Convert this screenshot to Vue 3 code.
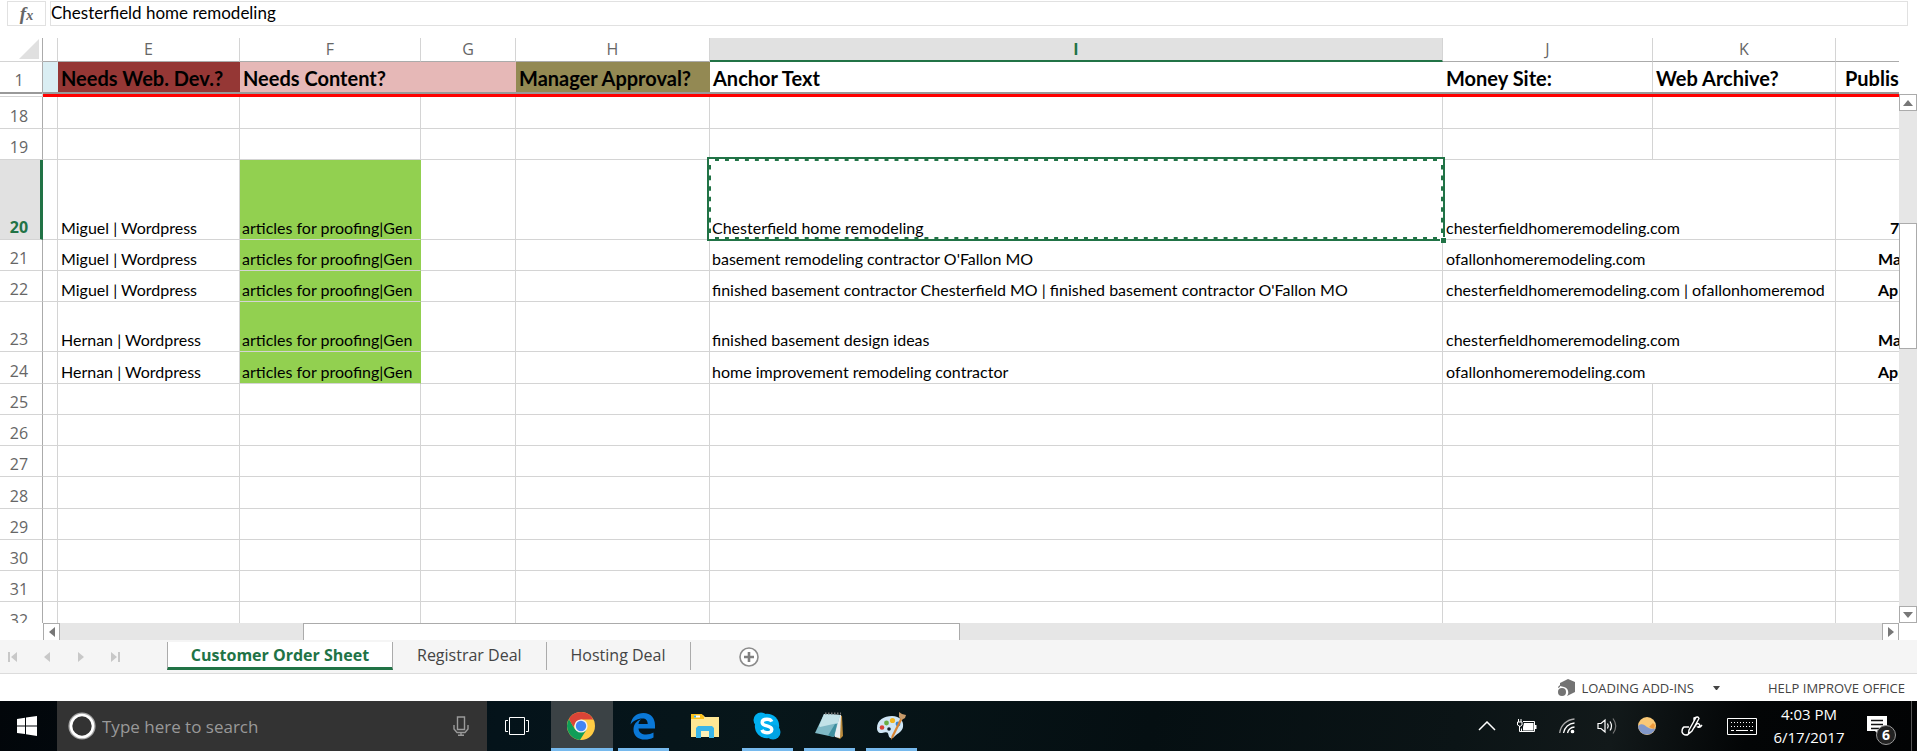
<template>
  <div class="window">
    <div class="formula-bar">
      <button class="fx" aria-label="Insert function"><i>f</i><sub>x</sub></button>
      <input v-model="formula" class="formula" aria-label="Formula bar" spellcheck="false" />
    </div>

    <div class="sheet-area">
      <div class="sheet">
        <table>
          <colgroup>
            <col class="w-head" />
            <col class="w-d" />
            <col class="w-e" />
            <col class="w-f" />
            <col class="w-g" />
            <col class="w-h" />
            <col />
            <col class="w-j" />
            <col class="w-k" />
            <col class="w-l" />
          </colgroup>
          <thead>
            <tr class="letters">
              <th class="corner"><svg width="20" height="20"><path d="M20 0V20H0Z" fill="#e0e0e0" /></svg></th>
              <th v-for="(l, i) in letters" :key="i" :class="{ active: l === 'I' }">{{ l }}</th>
            </tr>
            <tr class="titles">
              <th class="num">1</th>
              <td class="blue"></td>
              <td class="maroon">Needs Web. Dev.?</td>
              <td class="pink" colspan="2">Needs Content?</td>
              <td class="olive">Manager Approval?</td>
              <td>Anchor Text</td>
              <td class="lined">Money Site:</td>
              <td class="lined">Web Archive?</td>
              <td class="publish">Publis</td>
            </tr>
            <tr class="freeze">
              <th></th>
              <td colspan="9"></td>
            </tr>
          </thead>
          <tbody>
            <tr v-for="row in rows" :key="row.n" :class="row.size">
              <th class="num" :class="{ active: row.n === 20 }">{{ row.n }}</th>
              <td></td>
              <td><div class="text">{{ row.dev }}</div></td>
              <td :class="{ green: row.dev }"><div v-if="row.dev" class="text">articles for proofing|Gen</div></td>
              <td></td>
              <td></td>
              <td class="anchor" :class="{ selected: row.n === 20 }">
                <div class="text">{{ row.anchor }}</div>
                <div v-if="row.n === 20" class="marquee"></div>
              </td>
              <template v-if="row.site">
                <td colspan="2"><div class="text site">{{ row.site }}</div></td>
              </template>
              <template v-else>
                <td></td>
                <td></td>
              </template>
              <td class="date" :class="{ short: row.n === 20 }"><div class="text">{{ row.date }}</div></td>
            </tr>
          </tbody>
        </table>
      </div>
      <div class="vscroll">
        <button aria-label="Scroll up"><svg width="10" height="6"><path d="M5 0L10 6H0Z" /></svg></button>
        <div class="track v-before"></div>
        <div class="thumb"></div>
        <div class="track v-after"></div>
        <button aria-label="Scroll down"><svg width="10" height="6"><path d="M0 0H10L5 6Z" /></svg></button>
      </div>
    </div>

    <div class="hscroll">
      <button aria-label="Scroll left"><svg width="6" height="10"><path d="M6 0V10L0 5Z" /></svg></button>
      <div class="track h-before"></div>
      <div class="thumb"></div>
      <div class="track h-after"></div>
      <button aria-label="Scroll right"><svg width="6" height="10"><path d="M0 0V10L6 5Z" /></svg></button>
    </div>

    <div class="tabs">
      <div class="arrows">
        <button aria-label="First sheet"><svg width="10" height="10"><path d="M0 0H2V10H0ZM9 0V10L3 5Z" /></svg></button>
        <button aria-label="Previous sheet"><svg width="10" height="10"><path d="M8 0V10L2 5Z" /></svg></button>
        <button aria-label="Next sheet"><svg width="10" height="10"><path d="M2 0V10L8 5Z" /></svg></button>
        <button aria-label="Last sheet"><svg width="10" height="10"><path d="M8 0H10V10H8ZM1 0V10L7 5Z" /></svg></button>
      </div>
      <button class="tab current">Customer Order Sheet</button>
      <button class="tab">Registrar Deal</button>
      <button class="tab">Hosting Deal</button>
      <button class="add" aria-label="New sheet">
        <svg width="20" height="20" viewBox="0 0 20 20" fill="none">
          <circle cx="10" cy="10" r="9" fill="#fff" stroke="#8c8c8c" stroke-width="1.6" />
          <path d="M10 5V15M5 10H15" stroke="#808080" stroke-width="2.6" />
        </svg>
      </button>
    </div>

    <div class="status">
      <button class="addins">
        <svg width="18" height="18" viewBox="0 0 18 18" fill="#737373">
          <path d="M2 4L10 0L17 3V13L9 17A5.6 5.6 0 0 0 6 8L2 7Z" />
          <circle cx="4" cy="13" r="4" />
          <path d="M0 8L2 6V8L0 9Z" />
        </svg>
        <span>LOADING ADD-INS</span>
        <svg class="caret" width="7" height="4"><path d="M0 0H7L4 4H3Z" fill="#444" /></svg>
      </button>
      <a href="#">HELP IMPROVE OFFICE</a>
    </div>

    <div class="taskbar">
      <button class="start" aria-label="Start">
        <svg width="20" height="20" viewBox="0 0 20 20" fill="#fff">
          <path d="M0 3L8 1.8V9.4H0ZM9 1.6L20 0V9.4H9ZM0 10.4H8V18L0 17ZM9 10.4H20V20L9 18.3Z" />
        </svg>
      </button>
      <label class="search">
        <svg width="28" height="28" viewBox="0 0 28 28" fill="none">
          <circle cx="14" cy="14" r="12.6" stroke="#a5a5a5" stroke-width="2" />
          <circle cx="14" cy="14" r="11" stroke="#fff" stroke-width="2.6" />
        </svg>
        <input type="text" placeholder="Type here to search" aria-label="Type here to search" />
        <svg width="16" height="20" viewBox="0 0 16 20" fill="none" stroke="#9a9a9a" stroke-width="1.4">
          <path d="M4.5 1H11.5V13.5H4.5ZM1 9V13L4 16.5H12L15 13V9M8 16.5V19M5 19.2H11" />
        </svg>
      </label>
      <button class="taskview" aria-label="Task view">
        <svg width="24" height="18" viewBox="0 0 24 18" fill="none" stroke="#fff" stroke-width="1">
          <path d="M4.5 0.5H19.5V17.5H4.5ZM3 3.5H0.5V14.5H3M21 3.5H23.5V14.5H21" />
        </svg>
      </button>

      <button class="app focused" aria-label="Chrome">
        <svg width="28" height="28" viewBox="0 0 28 28">
          <circle cx="14" cy="14" r="14" fill="#fc4" />
          <path d="M1.9 7A14 14 0 0 0 13 28L19.6 17.5L14 20L8 17.2Z" fill="#0f9d58" />
          <path d="M1.9 7A14 14 0 0 1 26.3 7.5H14L8 12L6.500 15Z" fill="#db4437" />
          <circle cx="14" cy="14" r="6.6" fill="#f1f1f1" />
          <circle cx="14" cy="14" r="5.2" fill="#4285f4" />
        </svg>
      </button>
      <button class="app open" aria-label="Edge">
        <svg width="26" height="28" viewBox="0 0 26 28">
          <path d="M0.5 12.5C2 4.5 7 1 13.4 1C21 1 25 6.500 25 13V16.500H8.500C8.800 20.500 12 22.500 16 22.500C19 22.500 21.500 21.700 23.500 20.500V25.500C21 27 18 27.600 15 27.600C7.500 27.600 3.500 23.500 3.500 17.500C3.500 12.500 6.500 9 11 7.300C9.400 8.800 8.700 10.300 8.500 12H17.700C17.700 8.500 16 6.500 12.500 6.500C7.500 6.500 3 9 0.500 12.500Z" fill="#0a78d7" />
        </svg>
      </button>
      <button class="app" aria-label="File Explorer">
        <svg width="28" height="24" viewBox="0 0 28 24">
          <path d="M0 1H12L14 3H28V23H0Z" fill="#ffe794" />
          <path d="M0 0H11L13 3V5H0Z" fill="#fcc21c" />
          <path d="M3 1.500H9V3.500H3Z" fill="#fff" />
          <path d="M3 1.500H5V3.500H3Z" fill="#3ab5e9" />
          <path d="M5 24V14L7 12H21L23 14V24H18V17H10V24Z" fill="#3ab5e9" />
          <path d="M10 17H18V23H10Z" fill="#fdf0b8" />
        </svg>
      </button>
      <button class="app open" aria-label="Skype">
        <svg width="28" height="28" viewBox="0 0 28 28">
          <circle cx="14" cy="14" r="12.200" fill="#00aff0" />
          <circle cx="8" cy="8" r="7.500" fill="#00aff0" />
          <circle cx="20" cy="20" r="7.500" fill="#00a3e4" />
          <path d="M18.800 9.600C18 7.900 16.300 7.200 14 7.200C11.200 7.200 9.200 8.500 9.200 10.500C9.200 15 18.800 12.800 18.800 17.400C18.800 19.500 16.700 20.800 14 20.800C11.500 20.800 9.600 19.900 8.900 17.900" fill="none" stroke="#fff" stroke-width="3.400" />
        </svg>
      </button>
      <button class="app open" aria-label="Notepad">
        <svg width="28" height="28" viewBox="0 0 28 28">
          <path d="M25 3L27 4L28 24L25 27L21 25Z" fill="#b98a3c" />
          <path d="M10 2L26 3L25 26L20 25Z" fill="#e9eef0" />
          <path d="M9 2L25 3L19 25L0 21Z" fill="#7fb9c6" />
          <path d="M9 2L25 3L23 11L5 15L4 14Z" fill="#c2e2e8" />
          <path d="M20 12L13 23.500L19 25L22 12Z" fill="#3f8f9f" />
          <path d="M10 1.500H26" stroke="#777" stroke-width="2" stroke-dasharray="1.500 1.500" />
        </svg>
      </button>
      <button class="app open" aria-label="Paint">
        <svg width="30" height="28" viewBox="0 0 30 28">
          <path d="M1 16C1 8 8 4 16 4C24 4 28 9 27 15C26 20 22 21 19 24C16 27.500 13 26.500 12.500 23C12 19.500 10 20 6 21C2.500 21.500 1 19 1 16Z" fill="#cfe6f5" />
          <circle cx="6" cy="15.500" r="2.300" fill="#d9433a" />
          <circle cx="10.500" cy="11" r="2.400" fill="#6bae45" />
          <circle cx="16.500" cy="8.500" r="2.600" fill="#f3b51f" />
          <circle cx="22" cy="12" r="2.400" fill="#3b85d0" />
          <circle cx="13" cy="17" r="1.800" fill="#15212a" />
          <path d="M24.500 6L26.500 7L17.500 25L15 28L15.500 24Z" fill="#d98432" />
          <path d="M23 0L26 2L30 3L29 6L25.500 8L23 5Z" fill="#c79a6a" />
        </svg>
      </button>

      <div class="tray">
        <button class="slot" aria-label="Show hidden icons">
          <svg width="18" height="10" viewBox="0 0 18 10" fill="none" stroke="#fff" stroke-width="1.500"><path d="M1 9L9 1L17 9" /></svg>
        </button>
        <button class="slot" aria-label="Battery">
          <svg width="20" height="14" viewBox="0 0 20 14">
            <path d="M6 2.500H17.500V12.500H4.500V9.500" fill="none" stroke="#fff" />
            <path d="M7 4H16.500V11.500H6V8Z" fill="#fff" />
            <path d="M18 6H19.500V10H18Z" fill="#fff" />
            <path d="M1.500 0V3M4 0V3M0.500 3H5V6L3 7.500L0.500 6ZM2.500 7V12.500H5" fill="none" stroke="#fff" />
          </svg>
        </button>
        <button class="slot" aria-label="Network">
          <svg width="16" height="16" viewBox="0 0 16 16" fill="none" stroke="#fff" stroke-width="1.300">
            <path d="M0.700 15A16 16 0 0 1 15.500 1" stroke="#aaa" />
            <path d="M4.500 15A12 12 0 0 1 15.500 5M8.500 15A8 8 0 0 1 15.500 9" />
            <circle cx="13.500" cy="13.500" r="1.200" fill="#fff" />
          </svg>
        </button>
        <button class="slot" aria-label="Volume">
          <svg width="20" height="18" viewBox="0 0 20 18" fill="none" stroke="#fff" stroke-width="1.200">
            <path d="M1 6.500H4L8 3V15L4 11.500H1ZM10.500 6.500Q12 9 10.500 11.500M13 4.500Q16 9 13 13.500" />
            <path d="M16 1.500Q21.500 9 16 16.500" stroke="#777" />
          </svg>
        </button>
        <button class="slot" aria-label="Weather">
          <svg width="18" height="18" viewBox="0 0 18 18">
            <circle cx="9" cy="9" r="9" fill="#f9c876" />
            <path d="M11 10L15 6L17 8L16 12Z" fill="#ef9a3d" />
            <path d="M0 9C3 6 6 7 9 10C12 12 15 12 17.500 11.500A9 9 0 0 1 0 9Z" fill="#8298c9" />
          </svg>
        </button>
        <button class="slot wide" aria-label="Windows Ink">
          <svg width="22" height="20" viewBox="0 0 22 20" fill="none" stroke="#fff" stroke-width="1.400">
            <path d="M8 14L15 1.500Q17 0 18 2.500L11 15L7.500 18ZM13 5V2L16 0.800M8 11H3Q1 12 1 16Q2 19 5 19Q8 19 8 16M13 12Q16 6 18 8Q20 10 17 11Q19 12 21 9" />
          </svg>
        </button>
        <button class="slot wide" aria-label="Touch keyboard">
          <svg width="30" height="17" viewBox="0 0 30 17" fill="none" stroke="#fff">
            <path d="M0.500 0.500H29.500V16.500H0.500Z" />
            <path d="M4 4.500H27M4 8.500H27" stroke-width="1" stroke-dasharray="1 2" />
            <path d="M4 12.500H7M9 12.500H21M23 12.500H26" />
          </svg>
        </button>
        <button class="clock"><span>4:03 PM</span><span>6/17/2017</span></button>
        <button class="notify" aria-label="Notifications">
          <svg width="21" height="20" viewBox="0 0 21 20">
            <path d="M0 0H20V15H12V19L8 15H0Z" fill="#fff" />
            <path d="M4 4.500H16M4 8.500H16M4 12.500H12" stroke="#111" stroke-width="1.300" />
          </svg>
          <span class="badge">6</span>
        </button>
        <button class="desktop" aria-label="Show desktop"></button>
      </div>
    </div>
  </div>
</template>

<script setup>
import { ref } from 'vue'

const formula = ref('Chesterfield home remodeling')
const letters = ['', 'E', 'F', 'G', 'H', 'I', 'J', 'K', '']

// Size is the row height class, normal rows have none
const rows = [
  { n: 18, size: 'first' },
  { n: 19 },
  { n: 20, size: 'tall', dev: 'Miguel | Wordpress', anchor: 'Chesterfield home remodeling', site: 'chesterfieldhomeremodeling.com', date: '7' },
  { n: 21, dev: 'Miguel | Wordpress', anchor: "basement remodeling contractor O'Fallon MO", site: 'ofallonhomeremodeling.com', date: 'Ma' },
  { n: 22, dev: 'Miguel | Wordpress', anchor: "finished basement contractor Chesterfield MO | finished basement contractor O'Fallon MO", site: 'chesterfieldhomeremodeling.com | ofallonhomeremod', date: 'Ap' },
  { n: 23, size: 'medium', dev: 'Hernan | Wordpress', anchor: 'finished basement design ideas', site: 'chesterfieldhomeremodeling.com', date: 'Ma' },
  { n: 24, size: 'first', dev: 'Hernan | Wordpress', anchor: 'home improvement remodeling contractor', site: 'ofallonhomeremodeling.com', date: 'Apr' },
  { n: 25 },
  { n: 26 },
  { n: 27 },
  { n: 28, size: 'first' },
  { n: 29 },
  { n: 30 },
  { n: 31 },
  { n: 32 }
]
</script>

<style>
body {
  margin: 0;
  background: #fff;
}
</style>

<style scoped>
.window {
  display: flex;
  flex-direction: column;
  height: 100vh;
  overflow: hidden;
  background: #fff;
  font-family: "Open Sans", "Noto Sans", sans-serif;
}

button,
input {
  font: inherit;
  color: inherit;
  border: none;
  border-radius: 0;
  background: none;
  padding: 0;
  margin: 0;
  outline: none;
}

button {
  display: flex;
  align-items: center;
  justify-content: center;
  flex-shrink: 0;
}

svg {
  display: block;
  flex-shrink: 0;
}

/* Formula bar */
.formula-bar {
  display: flex;
  flex-shrink: 0;
  gap: 4px;
  height: 25px;
  padding: 1px 9px 12px 7px;
}

.fx {
  width: 39px;
  border: 1px solid #e1e1e1;
  font-family: "Liberation Serif", serif;
  font-size: 19px;
  line-height: 20px;
  font-weight: bold;
  color: #666;
}

.fx sub {
  padding-top: 4px;
  font-size: 14px;
  font-style: italic;
}

.formula {
  flex: 1;
  min-width: 0;
  padding-bottom: 2px;
  border: 1px solid #e1e1e1;
  font-family: Lato, sans-serif;
  font-size: 17px;
  color: #000;
}

/* Grid */
.sheet-area {
  display: flex;
  flex: 1;
  min-height: 0;
}

.sheet {
  flex: 1;
  min-width: 0;
  overflow: hidden;
}

table {
  width: 100%;
  table-layout: fixed;
  border-collapse: separate;
  border-spacing: 0;
}

.w-head { width: 43px; }
.w-d { width: 15px; }
.w-e { width: 182px; }
.w-f { width: 181px; }
.w-g { width: 95px; }
.w-h { width: 194px; }
.w-j { width: 210px; }
.w-k { width: 183px; }
.w-l { width: 63px; }

th,
td {
  box-sizing: border-box;
  padding: 0;
  height: 31px;
  border-right: 1px solid #d4d4d4;
  border-bottom: 1px solid #d4d4d4;
}

tr > :last-child {
  border-right: none;
}

th {
  font-size: 16px;
  line-height: 22px;
  font-weight: normal;
  color: #666;
}

.letters th {
  height: 24px;
  padding-bottom: 1px;
  line-height: 20px;
  border-bottom-color: #ababab;
}

.letters .corner {
  border-right-color: #ababab;
  border-bottom-color: #d4d4d4;
}

.corner svg {
  margin-left: 19px;
}

.letters .active {
  background: #e1e1e1;
  border-bottom: 2px solid #217346;
  color: #217346;
  font-weight: bold;
}

th.num {
  padding-right: 4px;
  padding-bottom: 1px;
  border-right-color: #ababab;
  vertical-align: bottom;
}

th.num.active {
  padding-right: 2px;
  border-right: 3px solid #217346;
  background: #e1e1e1;
  color: #217346;
  font-weight: bold;
}

.titles th,
.titles td {
  height: 30px;
  border-bottom: none;
}

.titles td {
  padding-left: 3px;
  padding-top: 2px;
  border-right: none;
  font-family: Lato, sans-serif;
  font-size: 20px;
  line-height: 28px;
  font-weight: bold;
  white-space: nowrap;
  overflow: hidden;
}

.titles .lined {
  border-right: 1px solid #d4d4d4;
}

.titles .blue { background: #daeef3; }
.titles .maroon { background: #953735; }
.titles .pink { background: #e6b8b7; }
.titles .olive { background: #938953; }
.titles .publish { padding-left: 9px; }

.freeze th,
.freeze td {
  height: 5px;
  border-top: 2px solid #999;
}

.freeze td {
  border-bottom: none;
  background: #f00;
}

.first > * { height: 32px; }
.medium > * { height: 50px; }
.tall > * { height: 80px; }

tbody td {
  vertical-align: bottom;
}

.text {
  padding-left: 3px;
  overflow: hidden;
  font-family: Lato, sans-serif;
  font-size: 16px;
  line-height: 22px;
  white-space: nowrap;
  color: #000;
}

.site {
  margin-right: 2px;
}

.anchor .text {
  padding-left: 2px;
}

.green {
  background: #92d050;
  border-right-color: #92d050;
}

.green .text {
  padding-left: 2px;
}

.date .text {
  padding-left: 42px;
  font-weight: bold;
}

.date.short .text {
  padding-left: 54px;
}

.selected {
  position: relative;
}

.marquee {
  position: absolute;
  inset: -3px -3px -2px -3px;
  border: 4px solid #217346;
  pointer-events: none;
}

.marquee::before {
  content: "";
  position: absolute;
  inset: -2px;
  border: 2px dashed #fff;
}

.marquee::after {
  content: "";
  position: absolute;
  right: -5px;
  bottom: -6px;
  width: 5px;
  height: 5px;
  border-left: 1px solid #fff;
  border-top: 1px solid #fff;
  background: #217346;
}

/* Scrollbars */
.vscroll {
  display: flex;
  flex-direction: column;
  width: 18px;
  padding-top: 56px;
}

.hscroll {
  display: flex;
  flex-shrink: 0;
  height: 17px;
  padding: 0 18px 0 43px;
}

.vscroll button,
.hscroll button {
  box-sizing: border-box;
  width: 17px;
  height: 17px;
  border: 1px solid #ababab;
}

.hscroll button {
  border-bottom: none;
}

.vscroll button {
  width: 18px;
}

.vscroll path,
.hscroll path {
  fill: #777;
}

.track {
  background: #e6e6e6;
}

.thumb {
  box-sizing: border-box;
  border: 1px solid #ababab;
  background: #fff;
}

.v-before { flex: 112; }
.vscroll .thumb { flex: 125; }
.v-after { flex: 258; }
.h-before { flex: 243; }
.hscroll .thumb { flex: 656; border-bottom: none; }
.h-after { flex: 923; }

/* Sheet tabs */
.tabs {
  display: flex;
  flex-shrink: 0;
  height: 33px;
  border-bottom: 1px solid #dcdcdc;
  background: #f5f5f5;
}

.arrows {
  display: flex;
  box-sizing: border-box;
  width: 167px;
  gap: 24px;
  padding-left: 8px;
}

.arrows path {
  fill: #c8c8c8;
}

.tab {
  box-sizing: border-box;
  height: 28px;
  margin-top: 2px;
  padding: 0 24px 2px;
  border-right: 1px solid #ababab;
  font-size: 16px;
  color: #444;
}

.tab.current {
  width: 226px;
  padding: 0;
  border-left: 1px solid #ababab;
  border-bottom: 3px solid #217346;
  background: #fff;
  font-weight: bold;
  color: #217346;
}

.add {
  margin-left: 48px;
}

/* Status line */
.status {
  display: flex;
  flex-shrink: 0;
  align-items: center;
  justify-content: flex-end;
  gap: 48px;
  height: 27px;
  padding-right: 12px;
  font-size: 13px;
  color: #444;
}

.addins {
  gap: 5px;
}

.caret {
  margin-left: 14px;
}

.status a {
  color: inherit;
  text-decoration: none;
}

/* Taskbar */
.taskbar {
  display: flex;
  flex-shrink: 0;
  height: 50px;
  background: linear-gradient(100deg, #02060a 0%, #04131a 26%, #07161a 40%, #050f12 60%, #0b1416 76%, #12191a 84%, #030506 91%, #020304 100%);
  color: #fff;
}

.start {
  width: 57px;
  padding-right: 3px;
}

.search {
  display: flex;
  box-sizing: border-box;
  align-items: center;
  width: 430px;
  padding: 0 18px 0 11px;
  gap: 6px;
  background: #333;
}

.search input {
  flex: 1;
  min-width: 0;
  font-size: 17px;
}

.search input::placeholder {
  color: #999;
  opacity: 1;
}

.taskview {
  width: 64px;
  padding-right: 4px;
}

.app {
  position: relative;
  width: 62px;
  padding-right: 2px;
}

.app.focused {
  background: #3b4245;
}

.app.open::after,
.app.focused::after {
  content: "";
  position: absolute;
  left: 5px;
  right: 6px;
  bottom: 0;
  height: 3px;
  background: #76b9ed;
}

.app.focused::after {
  left: 0;
  right: 0;
}

.tray {
  display: flex;
  margin-left: auto;
}

.slot {
  width: 40px;
}

.slot.wide {
  width: 50px;
}

.clock {
  flex-direction: column;
  width: 84px;
  font-size: 15px;
  line-height: 23px;
}

.notify {
  position: relative;
  width: 60px;
  padding-right: 8px;
}

.badge {
  position: absolute;
  left: 25px;
  top: 24px;
  box-sizing: border-box;
  width: 20px;
  height: 20px;
  border: 1px solid #999;
  border-radius: 10px;
  background: #222;
  font-size: 14px;
  line-height: 18px;
  font-weight: bold;
  text-align: center;
}

.desktop {
  box-sizing: border-box;
  width: 6px;
  border-left: 1px solid #555;
}
</style>
